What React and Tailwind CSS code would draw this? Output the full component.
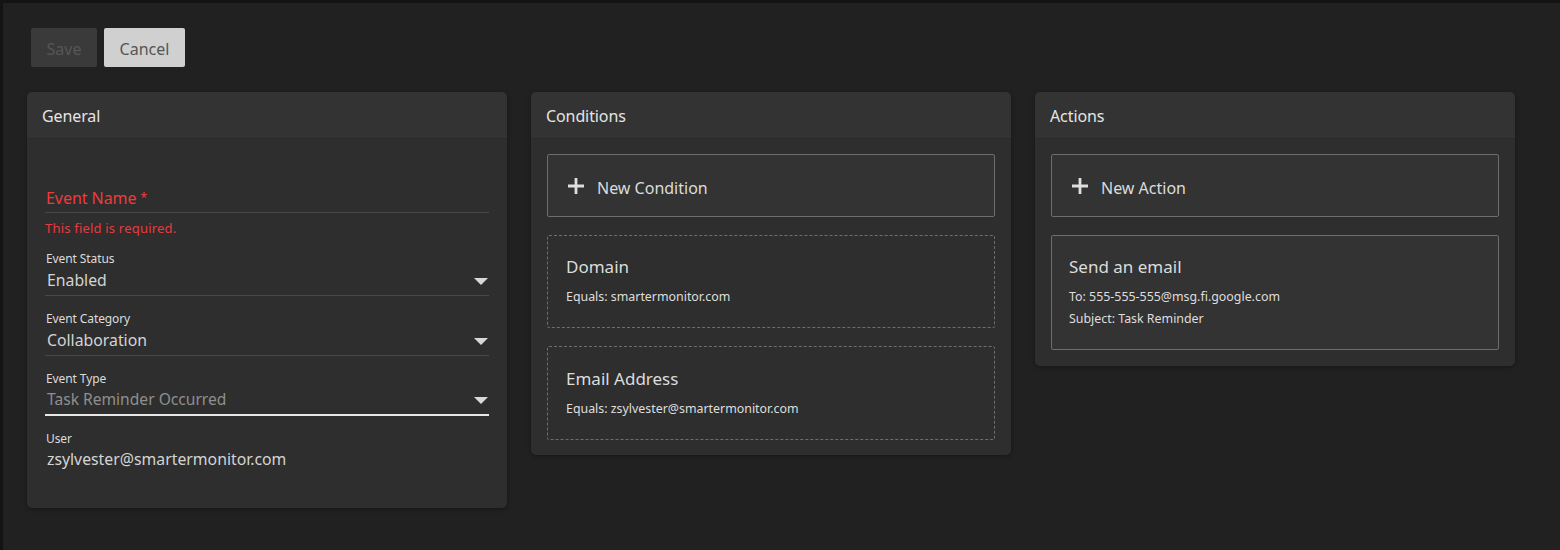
import React from 'react';

const font = { fontFamily: '"Noto Sans", sans-serif' };

const Caret = () => (
  <svg width="14" height="7" viewBox="0 0 14 7" className="shrink-0 mt-[1px]">
    <path d="M0 0h14L7 7z" fill="#d8d8d8" />
  </svg>
);

const Plus = () => (
  <svg width="18" height="18" viewBox="0 0 18 18" className="shrink-0">
    <path d="M7.6 1h2.8v6.6H17v2.8h-6.6V17H7.6v-6.6H1V7.600h6.600z" fill="#dedede" />
  </svg>
);

const Card = ({ title, children, bodyClass }) => (
  <section className="w-[480px] rounded-[5px] bg-[#2e2e2e] shadow-[0_1px_4px_rgba(0,0,0,0.35)] overflow-hidden">
    <div className="h-[47px] flex items-center px-[15px] pt-[1px] bg-[#333333] border-b border-[#2a2a2a] text-[16px] tracking-[-0.1px] text-[#e4e4e4]">
      {title}
    </div>
    <div className={bodyClass}>{children}</div>
  </section>
);

const FieldLabel = ({ children }) => (
  <div className="h-[14px] pl-[1px] leading-[14px] text-[12px] tracking-[-0.1px] text-[#dcdcdc]">{children}</div>
);

const SelectField = ({ label, value, valueClass, rowClass }) => (
  <div className="mb-[16px]">
    <FieldLabel>{label}</FieldLabel>
    <div className={`h-[30px] flex items-center justify-between pl-[2px] pr-[1px] ${rowClass} ${valueClass}`}>
      <span>{value}</span>
      <Caret />
    </div>
  </div>
);

const NewButton = ({ label }) => (
  <div className="h-[63px] flex items-center gap-[12px] pl-[19px] pt-[4px] border border-[#6e6e6e] rounded-[2px] bg-[#333333] text-[16px] text-[#dcdcdc]">
    <span className="-mt-[4px]"><Plus /></span>
    <span>{label}</span>
  </div>
);

const RuleBox = ({ title, lines, boxClass }) => (
  <div className={`mt-[18px] rounded-[2px] border border-[#6e6e6e] ${boxClass}`}>
    <div className="h-[28px] leading-[28px] text-[17px] text-[#dcdcdc]">{title}</div>
    <div className="mt-[5px] text-[12.4px] leading-[22px] text-[#dedede]">
      {lines.map(l => <div key={l}>{l}</div>)}
    </div>
  </div>
);

export default function App() {
  return (
    <div style={font} className="w-[1560px] h-[550px] overflow-hidden bg-[#141414] pt-[3px] pl-[3px]">
      <div className="h-full bg-[#212121] pl-[24px] pt-[25px]">
        <div className="flex gap-[7px] pl-[4px]">
          <button className="w-[66px] h-[39px] pt-[2px] rounded-[2px] bg-[#3a3a3a] text-[16px] text-[#565656]">Save</button>
          <button className="w-[81px] h-[39px] pt-[2px] rounded-[2px] bg-[#d0d0d0] text-[16px] text-[#555555]">Cancel</button>
        </div>
        <div className="mt-[25px] flex items-start gap-[24px]">
          <Card title="General" bodyClass="h-[369px] px-[18px] pt-[47px]">
            <div className="h-[27px] pl-[1px] text-[16px] leading-[24px] tracking-[-0.05px] text-[#ef3b3b] border-b border-[#484848]">
              Event Name <span className="text-[12px] align-top">*</span>
            </div>
            <div className="mt-[5px] h-[20px] leading-[20px] text-[13px] tracking-[0.2px] text-[#e63a3f]">This field is required.</div>
            <div className="mt-[14px]">
              <SelectField label="Event Status" value="Enabled" valueClass="text-[15.8px] text-[#d4d4d4]" rowClass="border-b border-[#484848]" />
              <SelectField label="Event Category" value="Collaboration" valueClass="text-[15.8px] text-[#d4d4d4]" rowClass="border-b border-[#484848]" />
              <SelectField label="Event Type" value="Task Reminder Occurred" valueClass="text-[15.6px] text-[#8f8f8f]" rowClass="border-b-2 border-[#e8e8e8]" />
            </div>
            <FieldLabel>User</FieldLabel>
            <div className="h-[27px] leading-[27px] pl-[2px] text-[15.8px] text-[#d4d4d4]">zsylvester@smartermonitor.com</div>
          </Card>
          <Card title="Conditions" bodyClass="px-[16px] pt-[15px] pb-[15px]">
            <NewButton label="New Condition" />
            <RuleBox title="Domain" lines={['Equals: smartermonitor.com']} boxClass="h-[93px] border-dashed px-[18px] pt-[17px]" />
            <RuleBox title="Email Address" lines={['Equals: zsylvester@smartermonitor.com']} boxClass="h-[94px] border-dashed px-[18px] pt-[18px]" />
          </Card>
          <Card title="Actions" bodyClass="px-[16px] pt-[15px] pb-[16px]">
            <NewButton label="New Action" />
            <RuleBox title="Send an email" lines={['To: 555-555-555@msg.fi.google.com', 'Subject: Task Reminder']} boxClass="h-[115px] bg-[#333333] px-[17px] pt-[17px]" />
          </Card>
        </div>
      </div>
    </div>
  );
}
